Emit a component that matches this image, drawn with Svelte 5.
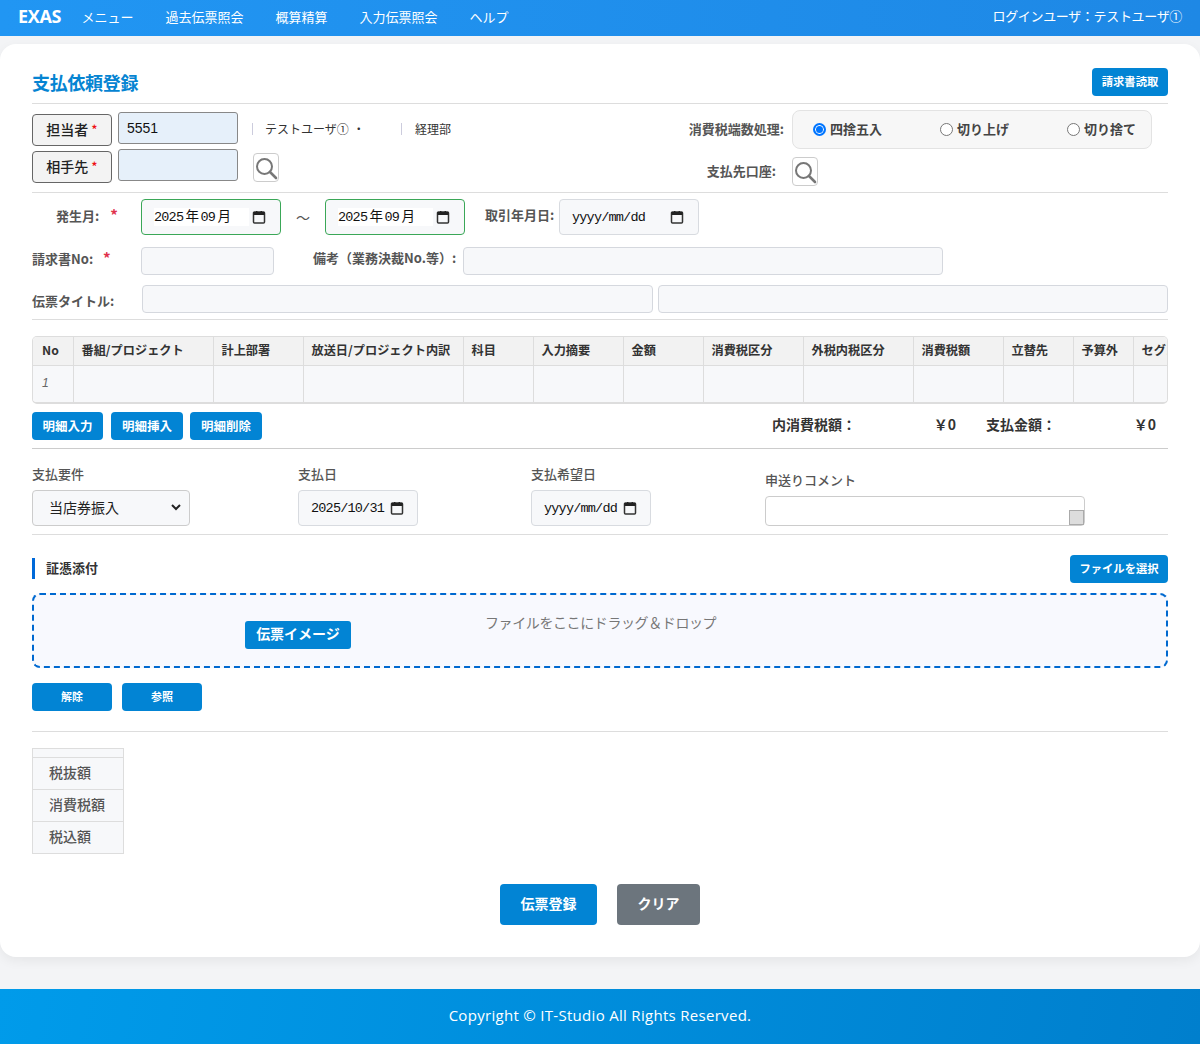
<script lang="ts">
  const nav = ['メニュー', '過去伝票照会', '概算精算', '入力伝票照会', 'ヘルプ'];
  const columns = [
    { label: 'No', width: 40 },
    { label: '番組/プロジェクト', width: 140 },
    { label: '計上部署', width: 90 },
    { label: '放送日/プロジェクト内訳', width: 160 },
    { label: '科目', width: 70 },
    { label: '入力摘要', width: 90 },
    { label: '金額', width: 80 },
    { label: '消費税区分', width: 100 },
    { label: '外税内税区分', width: 110 },
    { label: '消費税額', width: 90 },
    { label: '立替先', width: 70 },
    { label: '予算外', width: 60 },
    { label: 'セグメント', width: 80 }
  ];
  const rounding = [
    { label: '四捨五入', checked: true },
    { label: '切り上げ', checked: false },
    { label: '切り捨て', checked: false }
  ];
</script>

{#snippet calendar()}
  <svg class="cal" width="14" height="14" viewBox="0 0 14 14" aria-hidden="true">
    <path d="M2.5 2h9a1 1 0 0 1 1 1v9a1 1 0 0 1-1 1h-9a1 1 0 0 1-1-1V3a1 1 0 0 1 1-1z" fill="none" stroke="#333" stroke-width="1.5"/>
    <rect x="1.5" y="2" width="11" height="3" fill="#222"/>
    <rect x="4" y="1" width="1.4" height="2" fill="#222"/>
    <rect x="8.6" y="1" width="1.4" height="2" fill="#222"/>
  </svg>
{/snippet}

{#snippet search()}
  <button class="search" type="button" aria-label="検索">
    <svg width="24" height="24" viewBox="0 0 24 24" fill="none" stroke="#777" aria-hidden="true">
      <circle cx="10.5" cy="10.5" r="7.5" stroke-width="2"/>
      <path d="M16 16l6 6" stroke-width="2.6" stroke-linecap="round"/>
    </svg>
  </button>
{/snippet}

<header class="topbar">
  <div class="topnav">
    <span class="logo">EXAS</span>
    {#each nav as item}
      <span class="nav-item">{item}</span>
    {/each}
  </div>
  <span class="user">ログインユーザ：テストユーザ①</span>
</header>

<main class="card">
  <div class="title-row">
    <h1>支払依頼登録</h1>
    <button class="btn small scan" type="button">請求書読取</button>
  </div>

  <section class="party">
    <div class="party-left">
      <div class="party-row first">
        <span class="tag">担当者 <i>*</i></span>
        <input class="blue-input" value="5551" />
        <span class="info name">テストユーザ①<span class="sep">・</span></span>
        <span class="info dept">経理部</span>
      </div>
      <div class="party-row">
        <span class="tag">相手先 <i>*</i></span>
        <input class="blue-input" />
        <span class="search-left">{@render search()}</span>
      </div>
    </div>
    <div class="party-right">
      <div class="tax-row">
        <span class="lbl">消費税端数処理:</span>
        <div class="radios">
          {#each rounding as r}
            <label class="radio"><span class="dot" class:on={r.checked}></span>{r.label}</label>
          {/each}
        </div>
      </div>
      <div class="account-row">
        <span class="lbl">支払先口座:</span>
        {@render search()}
      </div>
    </div>
  </section>

  <section class="fields">
    <div class="line date-line">
      <span class="lbl occur">発生月: <i>*</i></span>
      <div class="date green w140"><span>2025 年 09 月</span>{@render calendar()}</div>
      <span class="tilde">～</span>
      <div class="date green w140"><span>2025 年 09 月</span>{@render calendar()}</div>
      <span class="lbl deal">取引年月日:</span>
      <div class="date w140"><span>yyyy/mm/dd</span>{@render calendar()}</div>
    </div>
    <div class="line no-line">
      <span class="lbl invoice">請求書No: <i>*</i></span>
      <input class="field w133" />
      <span class="lbl memo">備考（業務決裁No.等）:</span>
      <input class="field w480" />
    </div>
    <div class="line title-line">
      <span class="lbl slip">伝票タイトル:</span>
      <input class="field grow1" />
      <input class="field grow2" />
    </div>
  </section>

  <div class="table-wrap">
    <table class="detail">
      <thead>
        <tr>
          {#each columns as c}
            <th style="min-width:{c.width}px;width:{c.width}px">{c.label}</th>
          {/each}
        </tr>
      </thead>
      <tbody>
        <tr>
          {#each columns as c, i}
            <td>{#if i === 0}<em>1</em>{/if}</td>
          {/each}
        </tr>
      </tbody>
    </table>
  </div>

  <section class="actions">
    <button class="btn small a1" type="button">明細入力</button>
    <button class="btn small a2" type="button">明細挿入</button>
    <button class="btn small a2" type="button">明細削除</button>
    <div class="totals">
      <b class="t1">内消費税額：</b><b class="v1">￥0</b>
      <b class="t2">支払金額：</b><b class="v2">￥0</b>
    </div>
  </section>

  <section class="payment">
    <div class="pay-col c1">
      <span class="pay-lbl">支払要件</span>
      <div class="select">当店券振入
        <svg width="10" height="8" viewBox="0 0 10 8" aria-hidden="true"><path d="M1 2l4 4 4-4" fill="none" stroke="#222" stroke-width="2"/></svg>
      </div>
    </div>
    <div class="pay-col c2">
      <span class="pay-lbl">支払日</span>
      <div class="date w120"><span>2025/10/31</span>{@render calendar()}</div>
    </div>
    <div class="pay-col c3">
      <span class="pay-lbl">支払希望日</span>
      <div class="date w120"><span>yyyy/mm/dd</span>{@render calendar()}</div>
    </div>
    <div class="pay-col c4">
      <span class="pay-lbl">申送りコメント</span>
      <div class="comment"><span class="grip"></span></div>
    </div>
  </section>

  <div class="attach-head">
    <span class="attach-title">証憑添付</span>
    <button class="btn small pick" type="button">ファイルを選択</button>
  </div>

  <div class="drop">
    <span class="image-badge">伝票イメージ</span>
    <span class="drop-text">ファイルをここにドラッグ＆ドロップ</span>
  </div>

  <div class="drop-actions">
    <button class="btn small wide" type="button">解除</button>
    <button class="btn small wide" type="button">参照</button>
  </div>

  <table class="sum">
    <tbody>
      <tr class="blank"><td></td></tr>
      <tr><td>税抜額</td></tr>
      <tr><td>消費税額</td></tr>
      <tr><td>税込額</td></tr>
    </tbody>
  </table>

  <div class="submit">
    <button class="btn big" type="button">伝票登録</button>
    <button class="btn big gray" type="button">クリア</button>
  </div>
</main>

<footer class="footer">Copyright © IT-Studio All Rights Reserved.</footer>

<style>
  :global(body) {
    margin: 0;
    background: #f3f4f6;
    font-family: "Noto Sans CJK JP", "Noto Sans", sans-serif;
    color: #333;
  }

  .topbar {
    height: 36px;
    box-sizing: border-box;
    padding: 0 18px 3px;
    display: flex;
    align-items: center;
    justify-content: space-between;
    background: linear-gradient(90deg, #2196f3, #1e88e5);
    color: #fff;
    font-size: 13px;
  }
  .topnav { display: flex; align-items: center; }
  .logo { font: bold 18px "Open Sans", sans-serif; letter-spacing: -0.3px; width: 63.5px; margin-top: -2px; }
  .nav-item { margin-right: 32px; }
  .user { letter-spacing: -0.33px; margin-top: -2px; }

  .card {
    margin-top: 8px;
    height: 913px;
    box-sizing: border-box;
    padding: 24px 32px 0;
    background: #fff;
    border-radius: 16px;
    box-shadow: 0 4px 12px rgba(0, 0, 0, 0.06);
  }

  .title-row {
    height: 35px;
    display: flex;
    justify-content: space-between;
    align-items: flex-start;
    border-bottom: 1px solid #ddd;
  }
  h1 { margin: 0; font-size: 18px; line-height: 28px; font-weight: 700; color: #0584d2; letter-spacing: -0.3px; }

  .btn {
    border: 0;
    border-radius: 4px;
    background: #0284d4;
    color: #fff;
    font-family: inherit;
    font-weight: 700;
    padding: 0 0 2px;
  }
  .btn.small { height: 28px; font-size: 12.5px; }
  .btn.scan, .btn.pick { font-size: 11.3px; }
  .scan { width: 76px; }

  .party {
    height: 88px;
    display: flex;
    justify-content: space-between;
    border-bottom: 1px solid #ddd;
    font-size: 12px;
  }
  .party-row { display: flex; align-items: flex-start; }
  .party-row.first { margin-top: 8px; height: 37px; }
  .tag {
    width: 80px;
    height: 32px;
    margin-top: 2px;
    margin-right: 6px;
    box-sizing: border-box;
    padding-bottom: 2px;
    display: flex;
    align-items: center;
    justify-content: center;
    gap: 3px;
    border: 1px solid #666;
    border-radius: 4px;
    background: #f3f3f3;
    color: #222;
    font-size: 14px;
    font-weight: 500;
  }
  .tag i { color: #e11; font-style: normal; font-size: 13px; }
  .blue-input {
    width: 120px;
    height: 32px;
    box-sizing: border-box;
    padding: 0 8px;
    border: 1px solid #888;
    border-radius: 3px;
    background: #e6f0fa;
    color: #111;
    font: 14px "Liberation Sans", sans-serif;
  }
  .info { margin-top: 8px; line-height: 18px; color: #333; }
  .name { margin-left: 14px; width: 149px; padding-left: 13px; box-sizing: border-box; position: relative; }
  .sep { margin-left: 4px; }
  .name::before, .dept::before {
    content: "";
    position: absolute;
    left: 0;
    top: 3px;
    width: 1px;
    height: 12px;
    background: #ccd;
  }
  .dept { position: relative; padding-left: 14px; }
  .search-left { margin: 4px 0 0 15px; }
  .search {
    width: 26px;
    height: 29px;
    padding: 0;
    display: flex;
    align-items: center;
    justify-content: center;
    border: 1px solid #ccc;
    border-radius: 4px;
    background: #fff;
  }

  .party-right { width: 480px; margin: 6px 16px 0 0; }
  .lbl { font-size: 13px; font-weight: 700; color: #555; white-space: nowrap; }
  .lbl i { color: #e0314b; font-style: normal; font-size: 15px; }
  .tax-row { display: flex; align-items: center; height: 39px; }
  .tax-row .lbl { width: 112px; text-align: right; margin: -2px 8px 0 0; }
  .radios {
    width: 360px;
    height: 39px;
    box-sizing: border-box;
    padding: 0 0 2px 20px;
    display: flex;
    align-items: center;
    border: 1px solid #e3e3e3;
    border-radius: 8px;
    background: #f7f7f7;
  }
  .radio { flex: 0 0 127px; display: flex; align-items: center; gap: 4px; font-weight: 700; font-size: 13px; color: #444; }
  .radio:last-child { flex: none; }
  .dot {
    width: 13px;
    height: 13px;
    margin-top: 2px;
    box-sizing: border-box;
    border: 1px solid #777;
    border-radius: 50%;
    background: #fff;
  }
  .dot.on { border: 2px solid #0075ff; box-shadow: inset 0 0 0 1px #fff; background: #0075ff; }
  .account-row { display: flex; align-items: center; margin-top: 8px; height: 29px; }
  .account-row .lbl { width: 104px; text-align: right; margin: -2px 16px 0 0; }

  .line { display: flex; align-items: center; }
  .fields { height: 126px; border-bottom: 1px solid #ddd; overflow: hidden; }
  .date-line { margin-top: 6px; height: 36px; }
  .no-line { margin-top: 12px; height: 28px; }
  .title-line { margin-top: 10px; height: 28px; }

  .occur { width: 85px; padding-left: 24px; margin-top: -5px; }
  .occur i { margin-left: 8px; }
  .deal { width: 70px; margin: -5px 4px 0 20px; }
  .tilde { width: 44px; text-align: center; font-size: 14px; color: #555; }
  .invoice { width: 109px; margin-top: -7px; }
  .invoice i { margin-left: 7px; }
  .memo { width: 146px; margin: -7px 4px 0 39px; }
  .slip { width: 110px; margin-top: 2px; }

  .date {
    height: 36px;
    box-sizing: border-box;
    display: flex;
    align-items: center;
    justify-content: space-between;
    padding: 0 14px 0 12px;
    border: 1px solid #d8dbe0;
    border-radius: 4px;
    background: #f7f8fa;
    font: 13.5px "Liberation Mono", "Noto Sans CJK JP", monospace;
    letter-spacing: -0.8px;
    color: #111;
    white-space: nowrap;
  }
  .w140 { width: 140px; }
  .w120 { width: 120px; padding-right: 14px; }
  .green { border-color: #3aa757; }
  .green span {
    flex: 1;
    height: 18px;
    line-height: 19px;
    margin-right: 3px;
    background: #fff;
    word-spacing: -5px;
  }
  .field {
    height: 28px;
    box-sizing: border-box;
    border: 1px solid #d5d8de;
    border-radius: 4px;
    background: #f7f8fa;
  }
  .w133 { width: 133px; }
  .w480 { width: 480px; }
  .grow1 { width: 511px; }
  .grow2 { width: 510px; margin-left: 5px; }

  .table-wrap {
    margin-top: 16px;
    height: 68px;
    box-sizing: border-box;
    border: 1px solid #ddd;
    border-width: 1px 1px 2px;
    border-radius: 5px;
    overflow: hidden;
  }
  .detail { border-collapse: collapse; table-layout: fixed; font-size: 12.2px; }
  .detail th {
    height: 28px;
    box-sizing: border-box;
    padding: 0 8px 2px;
    border: 1px solid #ddd;
    border-top: 0;
    border-left: 0;
    background: #f2f2f2;
    color: #333;
    text-align: left;
    white-space: nowrap;
    overflow: hidden;
    font-weight: 700;
  }
  .detail th:first-child { padding-left: 9px; }
  .detail td {
    height: 37px;
    box-sizing: border-box;
    padding: 0 8px 3px;
    border-right: 1px solid #ddd;
    background: #f7f8fa;
  }
  .detail em { color: #666; font-family: "Liberation Sans", sans-serif; padding-left: 1px; }

  .actions {
    height: 45px;
    box-sizing: border-box;
    padding-top: 8px;
    display: flex;
    align-items: flex-start;
    border-bottom: 1px solid #ccc;
  }
  .a1 { width: 71px; margin-right: 8px; }
  .a2 { width: 72px; margin-right: 7px; }
  .totals {
    flex: 1;
    display: flex;
    height: 28px;
    padding-bottom: 5px;
    box-sizing: border-box;
    align-items: center;
    margin-left: 503px;
    font-size: 14px;
    color: #333;
  }
  .totals b { font-weight: 700; white-space: nowrap; }
  .t1 { width: 84px; }
  .v1 { width: 100px; text-align: right; }
  .t2 { margin-left: 30px; width: 70px; }
  .v2 { width: 100px; text-align: right; }

  .payment {
    height: 86px;
    box-sizing: border-box;
    display: flex;
    align-items: flex-end;
    padding-bottom: 8px;
    border-bottom: 1px solid #ddd;
  }
  .pay-col { display: flex; flex-direction: column; gap: 7px; }
  .pay-lbl { font-size: 13px; line-height: 18px; color: #555; font-weight: 500; }
  .c1 { width: 266px; }
  .c2 { width: 233px; }
  .c3 { width: 234px; }
  .select {
    width: 158px;
    height: 36px;
    box-sizing: border-box;
    padding: 0 8px 2px 16px;
    display: flex;
    align-items: center;
    justify-content: space-between;
    border: 1px solid #ccc;
    border-radius: 4px;
    background: #f7f8fa;
    font-size: 14px;
    color: #222;
  }
  .c2 .date, .c3 .date { padding-left: 12px; padding-right: 13px; }
  .comment {
    width: 320px;
    height: 30px;
    box-sizing: border-box;
    position: relative;
    border: 1px solid #ccc;
    border-radius: 4px;
    background: #fff;
  }
  .grip {
    position: absolute;
    right: 0;
    bottom: 0;
    width: 15px;
    height: 15px;
    box-sizing: border-box;
    border: 1px solid #aaa;
    background: #ddd;
  }

  .attach-head {
    height: 28px;
    margin-top: 20px;
    display: flex;
    align-items: center;
    justify-content: space-between;
  }
  .attach-title {
    height: 21px;
    margin-top: -1px;
    box-sizing: border-box;
    padding: 0 0 3px 11px;
    display: flex;
    align-items: center;
    border-left: 3px solid #0069d9;
    font-size: 13px;
    font-weight: 700;
    color: #333;
  }
  .pick { width: 98px; }

  .drop {
    height: 75px;
    margin-top: 10px;
    box-sizing: border-box;
    padding: 26px 0 0 211px;
    display: flex;
    align-items: flex-start;
    border: 2px dashed #0069d0;
    border-radius: 8px;
    background: #f8f9fe;
  }
  .image-badge {
    width: 106px;
    height: 28px;
    padding-bottom: 4px;
    box-sizing: border-box;
    display: flex;
    align-items: center;
    justify-content: center;
    border-radius: 3px;
    background: #0284d4;
    color: #fff;
    font-size: 14px;
    font-weight: 700;
  }
  .drop-text { margin: -9px 0 0 134px; font-size: 14px; line-height: 20px; color: #777; letter-spacing: -0.4px; }

  .drop-actions {
    margin-top: 15px;
    height: 48px;
    display: flex;
    gap: 10px;
    border-bottom: 1px solid #ddd;
    align-items: flex-start;
  }
  .btn.wide { width: 80px; font-size: 11px; }

  .sum {
    margin-top: 16px;
    width: 92px;
    border-collapse: collapse;
    font-size: 14px;
    font-weight: 500;
    color: #555;
  }
  .sum td {
    height: 32px;
    box-sizing: border-box;
    padding: 0 16px 4px;
    border: 1px solid #ddd;
    background: #f7f8fa;
    white-space: nowrap;
  }
  .sum .blank td { height: 9px; padding: 0; }

  .submit {
    margin-top: 30px;
    display: flex;
    justify-content: center;
    gap: 20px;
  }
  .btn.big { height: 41px; width: 97px; font-size: 14px; padding-bottom: 4px; }
  .btn.big.gray { width: 83px; background: #6c757d; }

  .footer {
    margin-top: 32px;
    height: 55px;
    box-sizing: border-box;
    padding-bottom: 3px;
    display: flex;
    align-items: center;
    justify-content: center;
    background: linear-gradient(100deg, #009bea, #007fcd);
    color: #fff;
    font: 15px "Open Sans", sans-serif;
    letter-spacing: 0.3px;
  }
</style>
